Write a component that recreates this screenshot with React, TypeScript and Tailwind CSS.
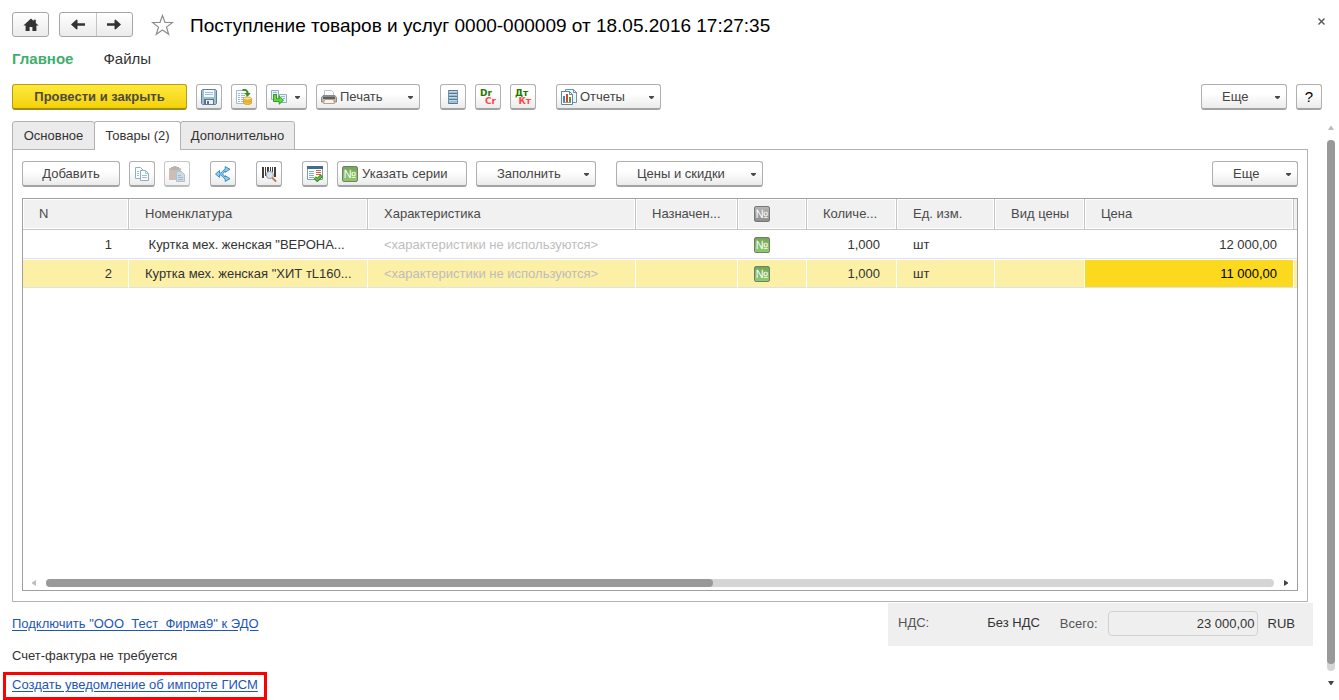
import React from "react";

function Caret() {
  return (
    <svg width="5" height="3" viewBox="0 0 5 3" className="mt-[2px] shrink-0" aria-hidden="true">
      <path d="M0 0h5v1L3 3H2L0 1z" fill="#4a4a4a" />
    </svg>
  );
}

function Btn({ label, className = "", children }: { label?: string; className?: string; children: React.ReactNode }) {
  return (
    <button
      type="button"
      aria-label={label}
      className={
        "flex h-[26px] shrink-0 items-center rounded-[3px] border border-b-2 border-[#b0b0b0] border-b-[#a3a3a3] bg-linear-to-b from-white from-40% to-[#ebebeb] text-[#444] " +
        className
      }
    >
      {children}
    </button>
  );
}

function IconBtn({ label, children, className = "" }: { label: string; children: React.ReactNode; className?: string }) {
  return (
    <Btn label={label} className={"w-[26px] justify-center " + className}>
      {children}
    </Btn>
  );
}

function DropBtn({ text, icon, className }: { text: string; icon?: React.ReactNode; className: string }) {
  return (
    <Btn className={className + " pr-[6px] " + (icon ? "gap-[3px] pl-1" : "pl-5")}>
      {icon}
      <span className="flex-1 text-left whitespace-nowrap">{text}</span>
      <Caret />
    </Btn>
  );
}

function Icon({ children }: { children: React.ReactNode }) {
  return (
    <svg width="16" height="16" viewBox="0 0 16 16" className="shrink-0" aria-hidden="true">
      {children}
    </svg>
  );
}

function NumberIcon({ grey = false }: { grey?: boolean }) {
  return (
    <span
      className={
        "flex h-4 w-4 shrink-0 items-center justify-center rounded-[2px] border text-[12px] leading-none text-white " +
        (grey
          ? "border-[#777] bg-linear-to-b from-[#b4b4b4] to-[#8e8e8e]"
          : "border-[#6f7f68] bg-linear-to-b from-[#74a659] to-[#8fcb68]")
      }
    >
      №
    </span>
  );
}

function SaveIcon() {
  return (
    <Icon>
      <path d="M1.5.5h13l1 1v13l-1 1h-13l-1-1v-13z" fill="#9dbdd4" stroke="#5f8099" />
      <rect x="3" y="1" width="10" height="7" fill="#f4f8fb" />
      <path d="M4 3.500h8M4 5.500h8" stroke="#9cc0d8" />
      <rect x="3" y="10" width="10" height="5" fill="#5b7488" />
      <rect x="5" y="11" width="7" height="4" fill="#e9eff3" />
      <rect x="6" y="12" width="2" height="3" fill="#5b7488" />
    </Icon>
  );
}

function PostIcon() {
  return (
    <Icon>
      <path d="M.5 1.500h10v13H.5z" fill="#f7fafc" stroke="#a9bccb" />
      <path d="M2 4.500h2M5 4.500h4M2 6.500h2M5 6.500h4M2 8.500h2M5 8.500h3M2 10.500h2M5 10.500h2M2 12.500h2M5 12.500h2" stroke="#a3bbcb" />
      <path d="M6.500 1.200c3.400-.9 5.200.4 5.200 3.300" fill="none" stroke="#3b8a1d" strokeWidth="1.900" />
      <path d="M8.500 4h6.200l-3.100 3.700z" fill="#3b8a1d" />
      <path d="M7.500 9.500v4.800c1.500 1.600 6.500 1.600 8 0V9.500z" fill="#f3c13a" stroke="#d09a2c" strokeWidth=".8" />
      <ellipse cx="11.500" cy="9.500" rx="4" ry="1.500" fill="#ffe88f" stroke="#d09a2c" strokeWidth=".8" />
      <path d="M7.500 12c1.500 1.400 6.500 1.400 8 0" fill="none" stroke="#d09a2c" strokeWidth=".8" />
    </Icon>
  );
}

function BasedOnIcon() {
  return (
    <Icon>
      <path d="M.5 1.500h7v9h-7z" fill="#edf4f9" stroke="#8fadc1" />
      <path d="M2 3.500h4M2 5.500h4" stroke="#9bb9cc" />
      <path d="M8.500 5.500h7v8h-7z" fill="#edf4f9" stroke="#8fadc1" />
      <path d="M10 7.500h4M12 9.500h2" stroke="#9bb9cc" />
      <path d="M2.500 5.500h3v4.300h2.700V7l4.300 4.200-4.300 4v-2.700H2.500z" fill="#63d944" stroke="#2f921c" strokeWidth=".9" />
    </Icon>
  );
}

function PrintIcon() {
  return (
    <Icon>
      <path d="M3.500 1.500h7l2 2v4h-9z" fill="#fbfcfd" stroke="#b9c4cb" />
      <path d="M2 6.500h12l1.500 2v4.500H.5V8.500z" fill="#b9b9b9" stroke="#8b8b8b" />
      <path d="M2 7.500h12v2.500H2z" fill="#5f5f5f" />
      <path d="M3.500 10.500h9l1 4h-11z" fill="#f8f1ec" stroke="#b5a294" />
      <rect x="12" y="10" width="2" height="1" fill="#f0a52c" />
    </Icon>
  );
}

function RegisterIcon() {
  return (
    <Icon>
      <rect x="3" y="1" width="10" height="14" fill="#9fbdd2" />
      <path d="M3 1.500h10M3 4.500h10M3 7.500h10M3 10.500h10M3 14.500h10" stroke="#547a96" />
      <path d="M3.500 1v14M12.500 1v14" stroke="#6d90a9" />
      <path d="M4 2.500h8M4 5.500h8M4 8.500h8M4 11.500h8" stroke="#c4d8e6" />
    </Icon>
  );
}

function ReportIcon() {
  return (
    <Icon>
      <path d="M4.500.5h8l3 3v10h-11z" fill="#eef4f8" stroke="#6d93ac" />
      <path d="M12.500.5v3h3" fill="none" stroke="#6d93ac" />
      <path d="M.5 2.500h8l3 3v10H.5z" fill="#fff" stroke="#5f879f" />
      <path d="M8.500 2.500v3h3" fill="none" stroke="#5f879f" />
      <rect x="2" y="7" width="2" height="6" fill="#4d86a8" />
      <rect x="5" y="5" width="2" height="8" fill="#d9452c" />
      <rect x="8" y="8" width="2" height="5" fill="#4f9c33" />
      <path d="M2 13.500h8" stroke="#999" />
    </Icon>
  );
}

function CopyIcon() {
  return (
    <Icon>
      <path d="M1.500 1.500h5l3 3v8h-8z" fill="#fdfeff" stroke="#8fb0c4" />
      <path d="M3 5.500h2M3 7.500h2M3 9.500h2" stroke="#9ec0d3" />
      <path d="M6.500 4.500h5l3 3v7h-8z" fill="#fdfeff" stroke="#8fb0c4" />
      <path d="M11.500 4.500v3h3M8 9.500h5M8 11.500h5" fill="none" stroke="#9ec0d3" />
    </Icon>
  );
}

function PasteIcon() {
  return (
    <Icon>
      <path d="M0 2h12v12H0z" fill="#b9a396" />
      <path d="M2 1h2l1-1h2l1 1h2v3H2z" fill="#959595" />
      <path d="M7.500 5.500h5l3 3v7h-8z" fill="#b9ccda" stroke="#8ea9bd" />
      <path d="M9 9.500h3M9 11.500h5M9 13.500h5" stroke="#7f9db3" />
    </Icon>
  );
}

function SplitIcon() {
  return (
    <Icon>
      <path
        d="M.5 8l4-3.400V7h1.300l4.400-4.200V.6L15 3.300l-4.800 3V4.900L7.500 8l2.700 3.100V9.700l4.800 3-4.800 2.700v-2.200L5.800 9H4.500v2.400z"
        fill="#8ccdf2"
        stroke="#2f83b8"
        strokeWidth=".9"
        strokeLinejoin="round"
      />
    </Icon>
  );
}

function BarcodeIcon() {
  return (
    <Icon>
      <path d="M1 1h2v11H1zM4 1h1v9H4zM6 1h2v5H6zM9 1h1v4H9zM11 1h1v5h-1zM13 1h2v10h-2z" fill="#3f3f3f" />
      <path d="M11.500 12l3 3" stroke="#b5835a" strokeWidth="2" strokeLinecap="round" />
      <circle cx="8.800" cy="9" r="3.600" fill="#d3e6f6" stroke="#a89a95" />
    </Icon>
  );
}

function ListCheckIcon() {
  return (
    <Icon>
      <path d="M.5 1.500h15v12H.5z" fill="#fff" stroke="#7e9db1" />
      <rect x="0" y="0" width="16" height="3" fill="#3e6d90" />
      <path d="M2 5.500h5M2 7.500h5M2 9.500h5M2 11.500h5" stroke="#8aa7ba" />
      <path d="M9 4.500h5M9 6.500h5M9 8.500h5" stroke="#e0603f" />
      <path d="M7.800 11.500l2.500 2.500 4.500-4.500" fill="none" stroke="#2e7f17" strokeWidth="3.200" />
      <path d="M7.900 11.600l2.400 2.300 4.400-4.400" fill="none" stroke="#63c53a" strokeWidth="1.600" />
    </Icon>
  );
}

function Ledger({ top, bottom }: { top: string; bottom: string }) {
  return (
    <span className="flex w-4 flex-col font-['DejaVu_Sans'] text-[9px] leading-[8px] font-bold">
      <span className="self-start text-[#1f7a00]">{top}</span>
      <span className="self-end text-[#ff4545]">{bottom}</span>
    </span>
  );
}

const headCell =
  "h-[31px] border-r border-b border-[#c6c6c6] bg-[#f1f1f1] px-4 text-left font-normal whitespace-nowrap text-[#4a4a4a] shadow-[inset_0_0_0_1px_#fff]";

const rows = [
  { n: 1, name: '\u00a0Куртка мех. женская "ВЕРОНА...', qty: "1,000", unit: "шт", price: "12 000,00", active: false },
  { n: 2, name: 'Куртка мех. женская "ХИТ тL160...', qty: "1,000", unit: "шт", price: "11 000,00", active: true },
];

function GoodsTable() {
  return (
    <table className="w-full min-w-[1100px] table-fixed border-separate border-spacing-0">
      <colgroup>
        <col className="w-[106px]" />
        <col />
        <col className="w-[268px]" />
        <col className="w-[102px]" />
        <col className="w-[69px]" />
        <col className="w-[90px]" />
        <col className="w-[98px]" />
        <col className="w-[90px]" />
        <col className="w-[209px]" />
        <col className="w-[3px]" />
      </colgroup>
      <thead>
        <tr>
          <th className={headCell}>N</th>
          <th className={headCell}>Номенклатура</th>
          <th className={headCell}>Характеристика</th>
          <th className={headCell}>Назначен...</th>
          <th className={headCell}>
            <NumberIcon grey />
          </th>
          <th className={headCell}>Количе...</th>
          <th className={headCell}>Ед. изм.</th>
          <th className={headCell}>Вид цены</th>
          <th className={headCell}>Цена</th>
          <th className="border-b border-[#c6c6c6] bg-[#f1f1f1] p-0" />
        </tr>
      </thead>
      <tbody>
        {rows.map((r) => {
          const cell =
            "h-[29px] border-b border-b-[#dfe2e6] px-4 pt-[2px] whitespace-nowrap " +
            (r.active ? "border-r border-r-white bg-[#fcf0a6] shadow-[inset_0_1px_0_#fff]" : "border-r border-r-transparent");
          return (
            <tr key={r.n}>
              <td className={cell + " text-right"}>{r.n}</td>
              <td className={cell}>{r.name}</td>
              <td className={cell + " text-[#bdbdbd]"}>&lt;характеристики не используются&gt;</td>
              <td className={cell} />
              <td className={cell}>
                <NumberIcon />
              </td>
              <td className={cell + " text-right"}>{r.qty}</td>
              <td className={cell}>{r.unit}</td>
              <td className={cell} />
              <td
                className={
                  r.active
                    ? "h-[29px] border-r border-b border-r-white border-b-[#dfe2e6] bg-[#fbd91f] px-4 pt-[2px] text-right whitespace-nowrap text-black shadow-[inset_0_1px_0_#fff]"
                    : cell + " text-right"
                }
              >
                {r.price}
              </td>
              <td className={"border-b border-b-[#dfe2e6] p-0 " + (r.active ? "bg-[#fcf0a6] shadow-[inset_0_1px_0_#fff]" : "")} />
            </tr>
          );
        })}
      </tbody>
    </table>
  );
}

export default function App() {
  return (
    <div className="flex h-screen min-h-[500px] flex-col bg-white font-['Liberation_Sans',Arial,sans-serif] text-[13px] leading-4 text-[#333]">
      <header className="flex h-[37px] items-start pt-3 pr-3 pl-3">
        <button
          type="button"
          aria-label="Начальная страница"
          className="flex h-[25px] w-[37px] items-center justify-center rounded-[3px] border border-[#a6a6a6] bg-linear-to-b from-white to-[#ebebeb]"
        >
          <svg width="16" height="14" viewBox="0 0 16 14" aria-hidden="true">
            <path d="M8 .6L.4 7.600h2.200V13h4V9h2.800v4h4V7.600h2.200L12.800 5V1.800h-2.200V3z" fill="#333" />
          </svg>
        </button>
        <div className="ml-[10px] flex h-[25px] w-[74px] divide-x divide-[#c4c4c4] rounded-[3px] border border-[#a6a6a6] bg-linear-to-b from-white to-[#ebebeb]">
          <button type="button" aria-label="Назад" className="flex flex-1 items-center justify-center">
            <svg width="14" height="11" viewBox="0 0 14 11" aria-hidden="true">
              <path d="M0 5.500L5.500.5 6.500 1v3.200H14v2.600H6.500V10l-1 .5z" fill="#333" />
            </svg>
          </button>
          <button type="button" aria-label="Вперед" className="flex flex-1 items-center justify-center">
            <svg width="14" height="11" viewBox="0 0 14 11" aria-hidden="true">
              <path d="M14 5.500L8.500.5 7.500 1v3.200H0v2.600h7.500V10l1 .5z" fill="#333" />
            </svg>
          </button>
        </div>
        <button type="button" aria-label="В избранное" className="ml-[18px] flex h-[25px] items-center">
          <svg width="23" height="22" viewBox="0 0 23 22" aria-hidden="true">
            <path
              d="M11.500 1.500l2.500 7h7.500l-6 4.600 2.200 7.200-6.200-4.400-6.200 4.400 2.200-7.200-6-4.600H9z"
              fill="#fff"
              stroke="#8c8c8c"
              strokeWidth="1.200"
            />
          </svg>
        </button>
        <h1 className="ml-4 flex-1 text-[19px] leading-[27px] whitespace-nowrap text-black">
          Поступление товаров и услуг 0000-000009 от 18.05.2016 17:27:35
        </h1>
        <button type="button" aria-label="Закрыть" className="flex h-[25px] w-3 items-start justify-center pt-[6px]">
          <svg width="7" height="7" viewBox="0 0 7 7" aria-hidden="true">
            <path d="M.5.5l6 6M6.500.5l-6 6" stroke="#555" strokeWidth="1.400" />
          </svg>
        </button>
      </header>

      <nav className="mt-[13px] flex gap-[30px] px-3 text-[15px] leading-[18px]">
        <a href="#main" className="font-bold text-[#3fae6c]">
          Главное
        </a>
        <a href="#files">Файлы</a>
      </nav>

      <div className="mt-4 flex pr-[17px] pl-3">
        <button
          type="button"
          className="h-[26px] w-[175px] rounded-[3px] border border-b-2 border-[#b59b13] border-b-[#a08a1c] bg-linear-to-b from-[#ffe939] to-[#f3d200] text-[13px] font-bold text-[#4f4a38]"
        >
          Провести и закрыть
        </button>
        <div className="ml-[9px] flex gap-[9px]">
          <IconBtn label="Записать">
            <SaveIcon />
          </IconBtn>
          <IconBtn label="Провести">
            <PostIcon />
          </IconBtn>
          <Btn label="Создать на основании" className="w-[41px] justify-between pr-[6px] pl-1">
            <BasedOnIcon />
            <Caret />
          </Btn>
          <DropBtn text="Печать" icon={<PrintIcon />} className="w-[104px]" />
        </div>
        <div className="ml-5 flex gap-[9px]">
          <IconBtn label="Регистр">
            <RegisterIcon />
          </IconBtn>
          <IconBtn label="Проводки Dr/Cr">
            <Ledger top="Dr" bottom="Cr" />
          </IconBtn>
          <IconBtn label="Проводки Дт/Кт">
            <Ledger top="Дт" bottom="Кт" />
          </IconBtn>
        </div>
        <DropBtn text="Отчеты" icon={<ReportIcon />} className="ml-5 w-[105px]" />
        <div className="ml-auto flex gap-[9px]">
          <DropBtn text="Еще" className="w-[86px]" />
          <IconBtn label="Справка">
            <span className="text-[15px] text-black">?</span>
          </IconBtn>
        </div>
      </div>

      <div className="mt-[11px] flex min-h-0 flex-1 pr-1 pl-3">
        <main className="flex min-w-0 flex-1 flex-col">
          <div role="tablist" className="z-10 -mb-px flex h-[29px]">
            <button type="button" role="tab" aria-selected="false" className="w-[83px] rounded-t-[3px] border border-[#b3b3b3] bg-[#ebebeb]">
              Основное
            </button>
            <button
              type="button"
              role="tab"
              aria-selected="true"
              className="-ml-px w-[87px] rounded-t-[3px] border border-b-0 border-[#b3b3b3] bg-white"
            >
              Товары (2)
            </button>
            <button type="button" role="tab" aria-selected="false" className="-ml-px w-[115px] rounded-t-[3px] border border-[#b3b3b3] bg-[#ebebeb]">
              Дополнительно
            </button>
          </div>

          <section className="mr-[5px] flex min-h-0 flex-1 flex-col border border-[#b3b3b3] px-[9px] pt-[11px] pb-[10px]">
            <div className="flex">
              <Btn className="w-[98px] justify-center">Добавить</Btn>
              <IconBtn label="Скопировать" className="ml-[9px]">
                <CopyIcon />
              </IconBtn>
              <IconBtn label="Вставить" className="ml-[9px] opacity-70">
                <PasteIcon />
              </IconBtn>
              <IconBtn label="Разбить строку" className="ml-5">
                <SplitIcon />
              </IconBtn>
              <IconBtn label="Поиск по штрихкоду" className="ml-5">
                <BarcodeIcon />
              </IconBtn>
              <IconBtn label="Проверить список" className="ml-5">
                <ListCheckIcon />
              </IconBtn>
              <Btn className="ml-[9px] w-[130px] gap-1 pl-1">
                <NumberIcon />
                Указать серии
              </Btn>
              <DropBtn text="Заполнить" className="ml-[9px] w-[120px]" />
              <DropBtn text="Цены и скидки" className="ml-5 w-[147px]" />
              <DropBtn text="Еще" className="ml-auto w-[86px]" />
            </div>

            <div className="mt-[11px] flex min-h-0 flex-1 flex-col border border-[#a0a0a0]">
              <div className="min-h-0 flex-1 overflow-hidden">
                <GoodsTable />
              </div>
              <div className="flex h-[14px] items-center gap-[10px] px-2">
                <svg width="5" height="6" viewBox="0 0 5 6" aria-hidden="true">
                  <path d="M5 0v6L1 3.500v-1z" fill="#bdbdbd" />
                </svg>
                <div className="h-2 flex-1 rounded-full bg-[#d5d5d5]">
                  <div className="h-2 w-[54.3%] rounded-full bg-[#999]" />
                </div>
                <svg width="5" height="6" viewBox="0 0 5 6" aria-hidden="true">
                  <path d="M0 0v6l4-2.500v-1z" fill="#444" />
                </svg>
              </div>
            </div>
          </section>

          <footer className="flex items-start justify-between">
            <div className="pt-[14px] pb-[7px]">
              <a href="#edo" className="block text-[#1d56b8] underline underline-offset-2">
                Подключить "ООО_Тест_Фирма9" к ЭДО
              </a>
              <p className="mt-4">Счет-фактура не требуется</p>
              <div className="relative mt-[13px] w-fit">
                <a href="#gism" className="text-[#1d56b8] underline underline-offset-2">
                  Создать уведомление об импорте ГИСМ
                </a>
                <div className="pointer-events-none absolute -inset-x-[9px] -top-[5px] -bottom-[7px] border-3 border-[#f00]" />
              </div>
            </div>
            <div className="mt-px flex h-[43px] w-[425px] items-center bg-[#efefef] pr-[18px] pb-[2px] pl-[10px]">
              <div className="flex flex-1 justify-between pr-5 pb-[2px]">
                <span className="text-[#555]">НДС:</span>
                <span>Без НДС</span>
              </div>
              <label htmlFor="total" className="text-[#555]">
                Всего:
              </label>
              <input
                id="total"
                readOnly
                value="23 000,00"
                className="ml-[10px] h-[25px] w-[150px] rounded-[4px] border border-[#d2d2d2] bg-transparent pr-[2px] text-right"
              />
              <span className="ml-[10px]">RUB</span>
            </div>
          </footer>
        </main>

        <div className="ml-[14px] flex w-2 flex-col items-center pt-[5px] pb-[15px]">
          <svg width="6" height="4" viewBox="0 0 6 4" className="shrink-0" aria-hidden="true">
            <path d="M0 4h6L3.500 0h-1z" fill="#bdbdbd" />
          </svg>
          <div className="mt-[10px] w-2 flex-1 rounded-full bg-[#d5d5d5]">
            <div className="h-[98.7%] w-2 rounded-full bg-[#999]" />
          </div>
          <svg width="6" height="4" viewBox="0 0 6 4" className="mt-[10px] shrink-0" aria-hidden="true">
            <path d="M0 0h6L3.500 4h-1z" fill="#444" />
          </svg>
        </div>
      </div>
    </div>
  );
}
